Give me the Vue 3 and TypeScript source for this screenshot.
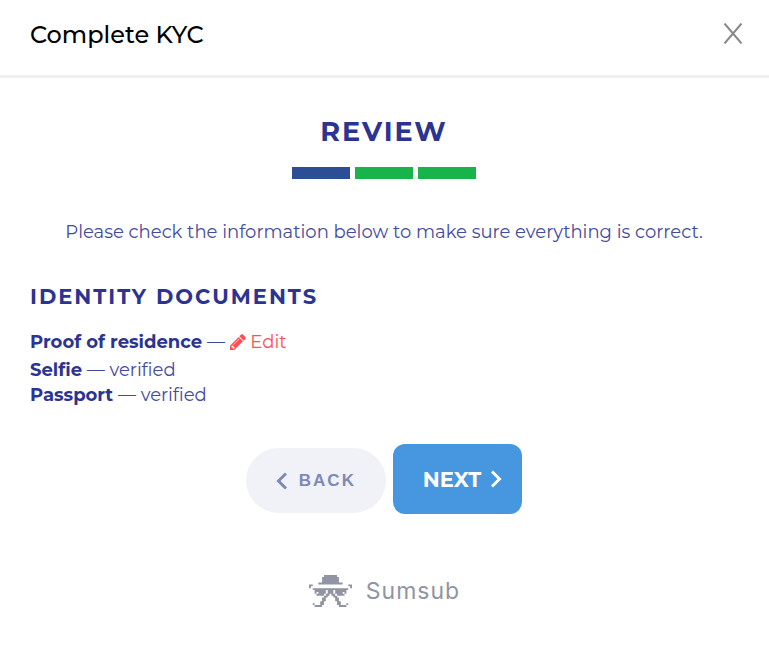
<script setup lang="ts">
interface IdentityDocument {
  name: string
  verified: boolean
}

const documents: IdentityDocument[] = [
  { name: 'Proof of residence', verified: false },
  { name: 'Selfie', verified: true },
  { name: 'Passport', verified: true },
]

const steps: string[] = ['current', 'done', 'done']

// Pixel-art logo, one character per cell.
const logoRows: string[] = [
  '........#######........',
  '.......#########.......',
  '.......#########.......',
  '.......#########.......',
  '.....#############.....',
  '##...................##',
  '#.....................#',
  '..###################..',
  '...######.###.######...',
  '...#.####.###.####.#...',
  '....####.##.##.####....',
  '........##...##........',
  '.......##.....##.......',
  '.......##.....##.......',
  '......##.......##......',
  '..#...##.......##...#..',
  '...####.........####...',
]

const logoPath = logoRows
  .map((row, y) => [...row].map((cell, x) => (cell === '#' ? `M${x} ${y}h1v1h-1z` : '')).join(''))
  .join('')
</script>

<template>
  <div class="page">
    <header class="top">
      <h1>Complete KYC</h1>
      <button class="close" type="button" aria-label="Close">
        <svg viewBox="0 0 20 21" width="20" height="21" aria-hidden="true">
          <path d="M1.500 .5 18.500 20.500M18.500 .5 1.500 20.500" />
        </svg>
      </button>
    </header>

    <main class="content">
      <h2>REVIEW</h2>
      <div class="steps">
        <span v-for="(step, i) in steps" :key="i" class="step" :class="step"></span>
      </div>
      <p class="hint">Please check the information below to make sure everything is correct.</p>

      <section>
        <h3>IDENTITY DOCUMENTS</h3>
        <ul class="documents">
          <li v-for="doc in documents" :key="doc.name">
            <b>{{ doc.name }}</b> —
            <template v-if="doc.verified">verified</template>
            <a v-else href="#"><svg viewBox="0 0 1536 1536" width="16" height="16" aria-hidden="true"><path d="M363 1408l91-91-235-235-91 91v107h128v128h107zM886 480c0-13-9-22-22-22-6 0-12 2-17 7L305 1007c-5 5-7 11-7 17 0 13 9 22 22 22 6 0 12-2 17-7l542-542c5-5 7-11 7-17zM832 288l416 416-832 832H0v-416L832 288zm683 96c0 34-14 67-37 90l-166 166-416-416 166-165c23-24 56-38 90-38s67 14 91 38l235 234c23 24 37 57 37 91z" /></svg> Edit</a>
          </li>
        </ul>
      </section>

      <div class="actions">
        <button class="back" type="button">
          <svg viewBox="0 0 11 18" width="11" height="18" aria-hidden="true"><path d="M10 1.500 2.500 9 10 16.500" /></svg>
          BACK
        </button>
        <button class="next" type="button">
          NEXT
          <svg viewBox="0 0 11 18" width="11" height="18" aria-hidden="true"><path d="M1 1.500 8.500 9 1 16.500" /></svg>
        </button>
      </div>
    </main>

    <footer class="brand">
      <svg viewBox="0 0 23 17" width="43" height="32" preserveAspectRatio="none" aria-hidden="true">
        <path :d="logoPath" />
      </svg>
      <span>Sumsub</span>
    </footer>
  </div>
</template>

<style>
body {
  margin: 0;
  background: #fff;
}
</style>

<style scoped>
.page {
  font-family: Montserrat, Inter, sans-serif;
  color: #2b3490;
}
.top {
  display: flex;
  align-items: flex-start;
  justify-content: space-between;
  padding: 20px 26px 25px 30px;
  border-bottom: 3px solid #efefef;
}
h1 {
  margin: 0;
  font-size: 24px;
  line-height: 30px;
  font-weight: 500;
  color: #000;
}
button {
  border: 0;
  cursor: pointer;
}
svg {
  display: block;
}
.close {
  margin-top: 3px;
  padding: 0;
  background: none;
}
.close path {
  fill: none;
  stroke: #888;
  stroke-width: 2;
}
.content {
  padding: 36px 31px 0 30px;
}
h2 {
  margin: 0;
  font-size: 27px;
  line-height: 36px;
  font-weight: 700;
  letter-spacing: 2px;
  text-align: center;
}
.steps {
  display: flex;
  justify-content: center;
  gap: 5px;
  margin-top: 17px;
}
.step {
  width: 58px;
  height: 12px;
  background: #18b44b;
}
.step.current {
  background: #2b4e96;
}
.hint {
  margin: 40px 0 0;
  font-size: 18px;
  line-height: 26px;
  font-weight: 400;
  color: #434b9d;
  text-align: center;
}
h3 {
  margin: 38px 0 0;
  font-size: 21px;
  line-height: 28px;
  font-weight: 700;
  letter-spacing: 2px;
}
.documents {
  margin: 19px 0 0;
  padding: 0;
  list-style: none;
  font-size: 18px;
  line-height: 25px;
  font-weight: 400;
  color: #434b9d;
}
.documents li:first-child {
  padding-bottom: 3px;
}
.documents b {
  font-weight: 700;
  color: #2b3490;
}
.documents a {
  color: #ff4f55;
  text-decoration: none;
}
.documents svg {
  display: inline-block;
  vertical-align: -2px;
  fill: currentColor;
}
.actions {
  display: flex;
  justify-content: center;
  align-items: center;
  gap: 7px;
  margin-top: 36px;
}
.actions button {
  display: flex;
  align-items: center;
  justify-content: center;
}
.actions path {
  fill: none;
  stroke: currentColor;
  stroke-width: 3;
}
.actions .back {
  gap: 12px;
  width: 140px;
  height: 65px;
  margin-top: 3px;
  border-radius: 33px;
  background: #f1f2f8;
  color: #7d89b8;
  font: 700 17px "Liberation Sans", sans-serif;
  letter-spacing: 2px;
}
.actions .next {
  gap: 10px;
  height: 70px;
  padding: 0 20px 0 30px;
  border-radius: 12px;
  background: #4696e0;
  color: #fff;
  font: 700 21px Montserrat, Inter, sans-serif;
}
.brand {
  display: flex;
  justify-content: center;
  align-items: center;
  gap: 14px;
  margin-top: 61px;
  padding-bottom: 44px;
  font: 400 23px Inter, sans-serif;
  letter-spacing: 1px;
  color: #9094a3;
}
.brand svg {
  fill: currentColor;
}
</style>
